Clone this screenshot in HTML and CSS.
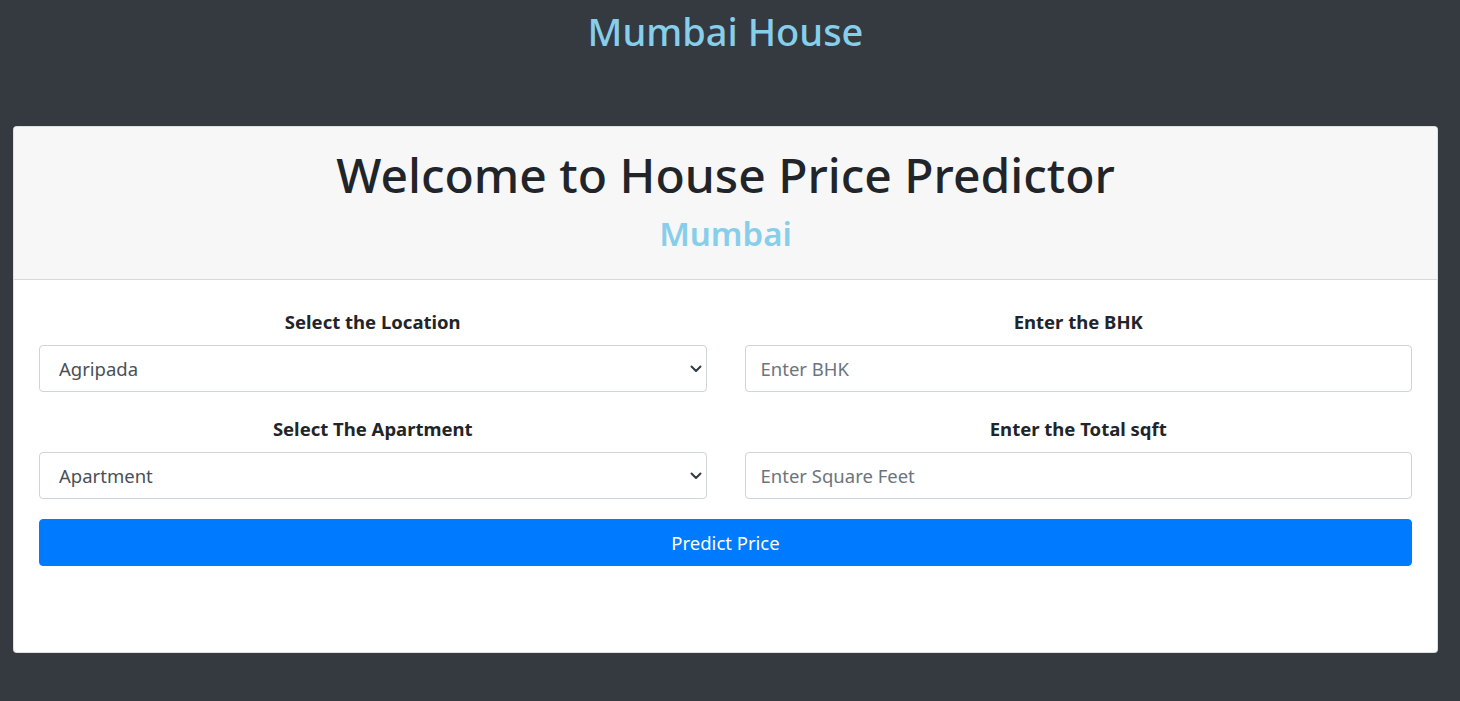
FILE: index.html
```html
<!DOCTYPE html>
<html lang="en">
<head>
<meta charset="utf-8">
<title>Mumbai House Price Predictor</title>
<link rel="stylesheet" href="styles.css">
</head>
<body>
<div class="wrap">
  <h1 class="site-title">Mumbai House</h1>
  <div class="card">
    <div class="card-header">
      <h1 class="welcome">Welcome to House Price Predictor</h1>
      <h2 class="city">Mumbai</h2>
    </div>
    <div class="card-body">
      <form class="form-grid">
        <div class="field">
          <label class="field-label" for="location">Select the Location</label>
          <div class="select-wrap">
            <select id="location" class="control select">
              <option>Agripada</option>
            </select>
            <svg class="chevron" width="12" height="8" viewBox="0 0 12 8"><path d="M1.5 1.5 L6 6 L10.5 1.5" fill="none" stroke="#343a40" stroke-width="2" stroke-linecap="round" stroke-linejoin="round"/></svg>
          </div>
        </div>
        <div class="field">
          <label class="field-label" for="bhk">Enter the BHK</label>
          <input id="bhk" class="control input" type="text" placeholder="Enter BHK">
        </div>
        <div class="field">
          <label class="field-label" for="apt">Select The Apartment</label>
          <div class="select-wrap">
            <select id="apt" class="control select">
              <option>Apartment</option>
            </select>
            <svg class="chevron" width="12" height="8" viewBox="0 0 12 8"><path d="M1.5 1.5 L6 6 L10.5 1.5" fill="none" stroke="#343a40" stroke-width="2" stroke-linecap="round" stroke-linejoin="round"/></svg>
          </div>
        </div>
        <div class="field">
          <label class="field-label" for="sqft">Enter the Total sqft</label>
          <input id="sqft" class="control input" type="text" placeholder="Enter Square Feet">
        </div>
        <button type="button" class="btn-predict">Predict Price</button>
      </form>
    </div>
  </div>
</div>
</body>
</html>
```
FILE: styles.css
```css
* { box-sizing: border-box; }
html, body { margin: 0; }
body {
  background: #343a40;
  font-family: "Noto Sans", "Open Sans", sans-serif;
  color: #212529;
  height: 701px;
  overflow: hidden;
}
.wrap {
  padding: 0 22px 0 13px;
}
.site-title {
  margin: 0;
  padding-top: 2px;
  height: 126px;
  text-align: center;
  color: #87ceeb;
  font-size: 38px;
  font-weight: 500;
  line-height: 58px;
}
.card {
  background: #fff;
  border: 1px solid rgba(0,0,0,.125);
  border-radius: 4px;
  overflow: hidden;
  height: 527px;
}
.card-header {
  background: #f7f7f7;
  border-bottom: 1px solid rgba(0,0,0,.125);
  height: 153px;
  text-align: center;
  padding-top: 15px;
}
.welcome {
  margin: 0;
  font-size: 48px;
  font-weight: 500;
  line-height: 66px;
  color: #212529;
}
.city {
  margin: 0;
  margin-top: 4px;
  font-size: 33px;
  font-weight: 600;
  line-height: 44px;
  color: #87ceeb;
}
.card-body {
  padding: 30px 25px 0 25px;
}
.form-grid {
  display: grid;
  grid-template-columns: 1fr 1fr;
  column-gap: 38px;
  row-gap: 25px;
}
.field {
  display: flex;
  flex-direction: column;
}
.field-label {
  text-align: center;
  font-weight: 700;
  font-size: 18.5px;
  line-height: 24px;
  margin-bottom: 11px;
  color: #212529;
}
.select-wrap {
  position: relative;
}
.control {
  display: block;
  width: 100%;
  height: 47px;
  border: 1px solid #ced4da;
  border-radius: 4px;
  background: #fff;
  font-family: inherit;
  font-size: 18.5px;
  color: #495057;
  outline: none;
}
.select {
  appearance: none;
  -webkit-appearance: none;
  padding: 0 40px 0 19px;
}
.input {
  padding: 0 15px;
}
.input::placeholder {
  color: #6c757d;
}
.chevron {
  position: absolute;
  right: 5px;
  top: 20px;
}
.btn-predict {
  grid-column: 1 / 3;
  margin-top: -5px;
  height: 47px;
  border: 1px solid #007bff;
  background: #007bff;
  color: #fff;
  border-radius: 4px;
  font-family: inherit;
  font-size: 18.5px;
  cursor: pointer;
}
```
